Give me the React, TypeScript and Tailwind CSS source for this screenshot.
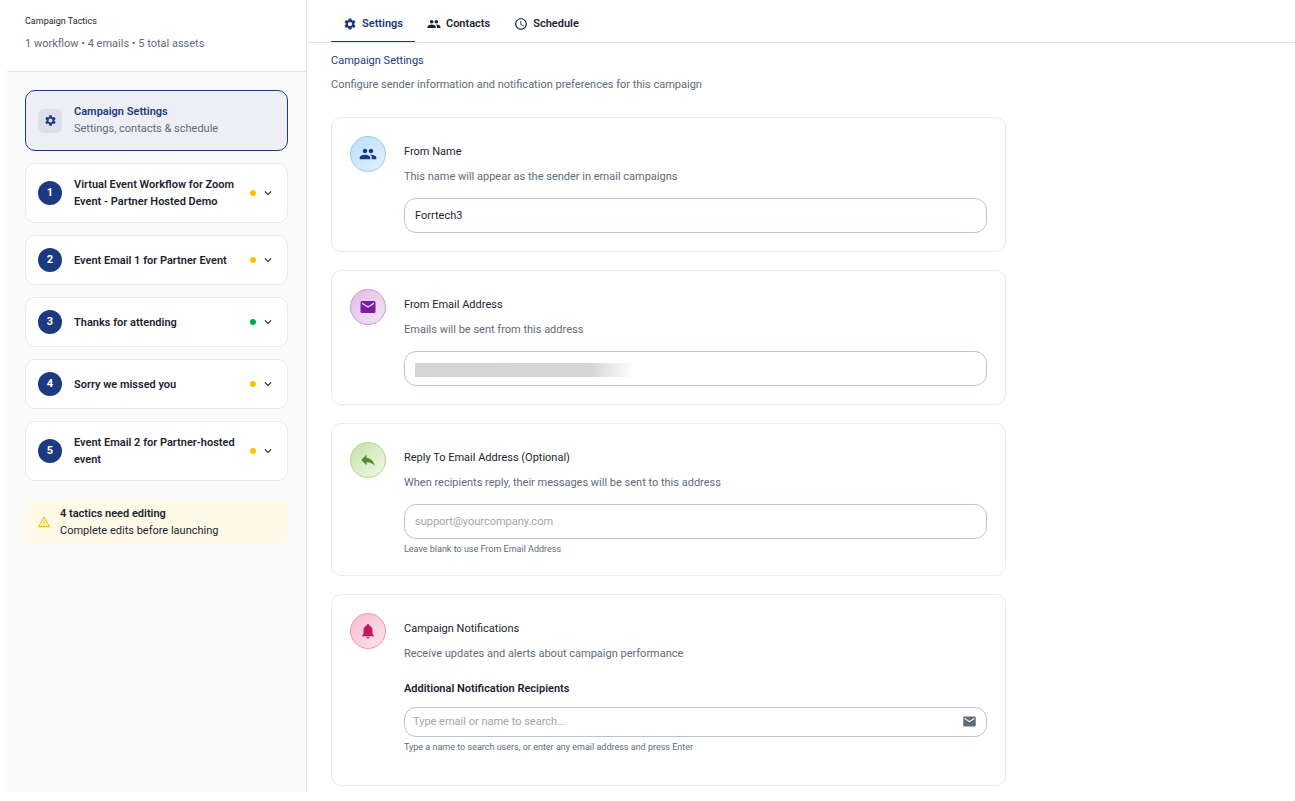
import React, { useState } from "react";
import {
  MdAccessTime,
  MdEmail,
  MdExpandMore,
  MdNotifications,
  MdPeople,
  MdReply,
  MdSettings,
  MdWarningAmber,
} from "react-icons/md";

const tabs = [
  { id: "settings", label: "Settings", Icon: MdSettings },
  { id: "contacts", label: "Contacts", Icon: MdPeople },
  { id: "schedule", label: "Schedule", Icon: MdAccessTime },
];

const tactics = [
  { title: "Virtual Event Workflow for Zoom Event - Partner Hosted Demo", ready: false },
  { title: "Event Email 1 for Partner Event", ready: false },
  { title: "Thanks for attending", ready: true },
  { title: "Sorry we missed you", ready: false },
  { title: "Event Email 2 for Partner-hosted event", ready: false },
];

const inputClass =
  "block w-full rounded-xl border border-[#b8c4ce] bg-white text-[11px] text-[#1b2430] placeholder-[#a3a5a8] focus:outline-none focus:border-[#1b3a82]";

type SettingCardProps = {
  icon: React.ReactNode;
  iconClass: string;
  title: React.ReactNode;
  description: string;
  children: React.ReactNode;
};

const SettingCard = ({ icon, iconClass, title, description, children }: SettingCardProps) => (
  <section className="flex gap-[18px] rounded-[10px] border border-[#e8eaec] bg-white p-[18px]">
    <div className={`flex size-9 shrink-0 items-center justify-center rounded-full border bg-linear-135 ${iconClass}`}>
      {icon}
    </div>
    <div className="min-w-0 flex-1 pt-[7px]">
      <h3 className="mb-[7px] leading-[18px]">{title}</h3>
      <p className="mb-3 leading-[18px] text-[#5d6b7a]">{description}</p>
      {children}
    </div>
  </section>
);

const Sidebar = () => (
  <aside className="flex w-[300px] shrink-0 flex-col border-r border-[#e3e5e8] bg-[#fafafa]">
    <header className="h-[72px] border-b border-[#e3e5e8] bg-white px-[18px] pt-3">
      <h2 className="text-[9px] leading-[18px]">Campaign Tactics</h2>
      <p className="mt-[5px] leading-[18px] text-[#5d6b7a]">1 workflow • 4 emails • 5 total assets</p>
    </header>
    <div className="flex flex-col gap-3 p-[18px]">
      <button
        type="button"
        className="flex items-center gap-3 rounded-[10px] border border-[#1b3a82] bg-[#eeeff5] p-3 text-left"
      >
        <span className="flex size-6 items-center justify-center rounded-md bg-[#dcdfea] text-[#1b3a82]">
          <MdSettings size={13} />
        </span>
        <span className="flex flex-col pb-px leading-[17px]">
          <span className="font-semibold text-[#1b3a82]">Campaign Settings</span>
          <span className="text-[#5d6b7a]">Settings, contacts &amp; schedule</span>
        </span>
      </button>
      {tactics.map((tactic, i) => (
        <button
          key={tactic.title}
          type="button"
          className="flex items-center gap-3 rounded-[10px] border border-[#e8eaec] bg-white p-3 text-left"
        >
          <span className="flex size-6 shrink-0 items-center justify-center rounded-full bg-[#1b3a82] font-bold text-white">
            {i + 1}
          </span>
          <span className="flex-1 leading-[17px] font-semibold">{tactic.title}</span>
          <span className="flex items-center gap-[5px]">
            <span className={`size-1.5 rounded-full ${tactic.ready ? "bg-[#00a651]" : "bg-[#ffbf00]"}`} />
            <MdExpandMore size={14} />
          </span>
        </button>
      ))}
      <div className="mt-[7px] flex items-center gap-[9px] rounded-md bg-[#fff9e8] px-3 py-[5px]">
        <MdWarningAmber size={14} className="text-[#ffbf00]" />
        <div className="leading-[17px]">
          <p className="font-semibold">4 tactics need editing</p>
          <p>Complete edits before launching</p>
        </div>
      </div>
    </div>
  </aside>
);

export default function App() {
  const [activeTab, setActiveTab] = useState("settings");
  const [fromName, setFromName] = useState("Forrtech3");

  return (
    <div className="flex min-h-screen bg-white pb-[9px] pl-[7px] font-[Roboto,sans-serif] text-[11px] text-[#1b2430]">
      <Sidebar />
      <main className="min-w-0 flex-1">
        <nav className="flex border-b border-[#e3e5e8] px-6">
          {tabs.map(({ id, label, Icon }) => (
            <button
              key={id}
              type="button"
              onClick={() => setActiveTab(id)}
              className={`flex h-[42px] items-center gap-[5px] border-b px-3 pt-1.5 leading-[17px] font-semibold ${
                activeTab === id ? "border-[#1b3a82] text-[#1b3a82]" : "border-transparent"
              }`}
            >
              <Icon size={14} />
              {label}
            </button>
          ))}
        </nav>
        <div className="px-6 pt-[9px]">
          <h1 className="leading-[18px] text-[#1b3a82]">Campaign Settings</h1>
          <p className="mt-1.5 leading-[18px] text-[#5d6b7a]">
            Configure sender information and notification preferences for this campaign
          </p>
          <div className="mt-[23px] flex max-w-[675px] flex-col gap-[18px]">
            <SettingCard
              icon={<MdPeople size={18} />}
              iconClass="border-[#90caf9] from-[#bbdefb] to-[#e3f2fd] text-[#1b3a82]"
              title={<label htmlFor="from-name">From Name</label>}
              description="This name will appear as the sender in email campaigns"
            >
              <input
                id="from-name"
                type="text"
                value={fromName}
                onChange={(e) => setFromName(e.target.value)}
                className={`${inputClass} h-[35px] px-2.5`}
              />
            </SettingCard>
            <SettingCard
              icon={<MdEmail size={18} />}
              iconClass="border-[#ce93d8] from-[#e1bee7] to-[#f3e5f5] text-[#7b1fa2]"
              title={<label htmlFor="from-email">From Email Address</label>}
              description="Emails will be sent from this address"
            >
              <div className="relative">
                <input id="from-email" type="email" className={`${inputClass} h-[35px] px-2.5`} />
                {/* hidden sender address */}
                <span className="pointer-events-none absolute top-3 left-[11px] h-3.5 w-[218px] bg-linear-to-r from-[#d5d5d7] via-[#d2d4d7] via-80% to-transparent" />
              </div>
            </SettingCard>
            <SettingCard
              icon={<MdReply size={18} />}
              iconClass="border-[#aed581] from-[#c5e1a5] to-[#f1f8e9] text-[#558b2f]"
              title={<label htmlFor="reply-to">Reply To Email Address (Optional)</label>}
              description="When recipients reply, their messages will be sent to this address"
            >
              <input
                id="reply-to"
                type="email"
                placeholder="support@yourcompany.com"
                className={`${inputClass} h-[35px] px-2.5`}
              />
              <p className="pt-[3px] text-[9px] leading-[15px] text-[#5d6b7a]">Leave blank to use From Email Address</p>
            </SettingCard>
            <SettingCard
              icon={<MdNotifications size={18} />}
              iconClass="border-[#f48fb1] from-[#f8bbd0] to-[#fce4ec] text-[#c2185b]"
              title="Campaign Notifications"
              description="Receive updates and alerts about campaign performance"
            >
              <label htmlFor="recipients" className="mt-[17px] mb-[9px] block leading-[18px] font-semibold">
                Additional Notification Recipients
              </label>
              <div className="relative">
                <input
                  id="recipients"
                  type="text"
                  placeholder="Type email or name to search..."
                  className={`${inputClass} h-[30px] pr-9 pb-px pl-2`}
                />
                <MdEmail size={15} className="absolute top-[7px] right-2.5 text-[#5d6b7a]" />
              </div>
              <p className="pt-[3px] pb-3 text-[9px] leading-[15px] text-[#5d6b7a]">
                Type a name to search users, or enter any email address and press Enter
              </p>
            </SettingCard>
          </div>
        </div>
      </main>
    </div>
  );
}
